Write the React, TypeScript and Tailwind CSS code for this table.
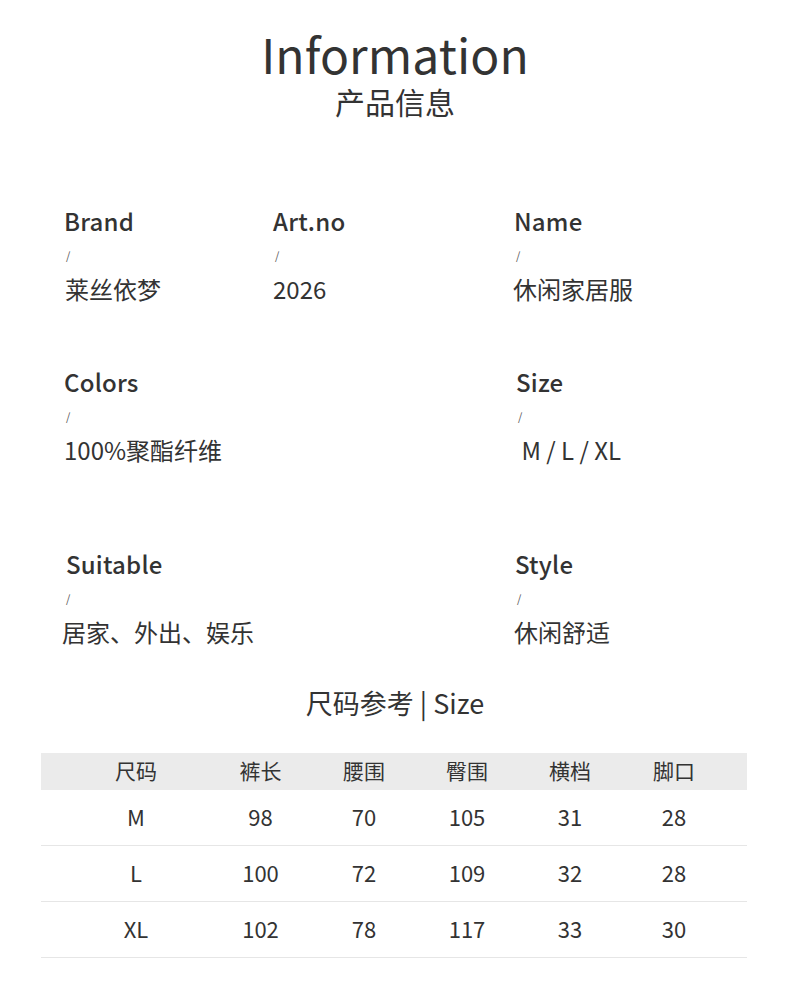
import React from "react";

const FONT = { fontFamily: '"Noto Sans CJK SC", "Noto Sans", sans-serif' };

interface InfoItemProps {
  label: string;
  value: string;
  labelClass?: string;
  valueClass?: string;
  slashClass?: string;
}

function InfoItem({ label, value, labelClass = "", valueClass = "", slashClass = "" }: InfoItemProps) {
  return (
    <div className="flex flex-col">
      <div className={"text-[24px] leading-none font-medium text-[#333] h-[24px] tracking-[0.2px] " + labelClass}>{label}</div>
      <div className={"text-[11px] leading-none text-[#555] mt-[17px] h-[12px] pl-[2px] " + slashClass}>/</div>
      <div className={"text-[24px] leading-none text-[#333] mt-[15px] h-[24px] whitespace-pre " + valueClass}>{value}</div>
    </div>
  );
}

const headers = ["尺码", "裤长", "腰围", "臀围", "横档", "脚口"];
const rows = [
  ["M", "98", "70", "105", "31", "28"],
  ["L", "100", "72", "109", "32", "28"],
  ["XL", "102", "78", "117", "33", "30"],
];

const gridCols = "grid grid-cols-[168px_103px_104px_102px_104px_104px] pr-[21px]";

export default function App() {
  return (
    <div className="w-[790px] h-[987px] bg-white text-[#333]" style={FONT}>
      {/* title */}
      <div className="pt-[29px] flex flex-col items-center">
        <div className="text-[48px] leading-none h-[48px] tracking-[0.1px]">Information</div>
        <div className="text-[30px] leading-none mt-[9px] h-[30px]">产品信息</div>
      </div>

      {/* info grid */}
      <div className="mt-[93px] pl-[64px]">
        <div className="grid grid-cols-[209px_241px_1fr]">
          <InfoItem label="Brand" value="莱丝依梦" valueClass="ml-[1px]" />
          <InfoItem label="Art.no" value="2026" />
          <InfoItem label="Name" value="休闲家居服" valueClass="-ml-[1px]" />
        </div>
        <div className="grid grid-cols-[450px_1fr] mt-[69px]">
          <InfoItem label="Colors" value="100%聚酯纤维" />
          <div className="ml-[2px]">
            <InfoItem label="Size" value=" M / L / XL" />
          </div>
        </div>
        <div className="grid grid-cols-[450px_1fr] mt-[90px]">
          <InfoItem label="Suitable" value="居家、外出、娱乐" labelClass="ml-[2px]" valueClass="-ml-[2px]" />
          <div className="ml-[1px]">
            <InfoItem label="Style" value="休闲舒适" valueClass="-ml-[1px]" />
          </div>
        </div>
      </div>

      {/* size heading */}
      <div className="mt-[45px] flex justify-center">
        <div className="text-[27px] leading-none h-[27px]">尺码参考 | Size</div>
      </div>

      {/* size table */}
      <div className="mt-[37px] mx-[41px] w-[706px]">
        <div className={gridCols + " bg-[#ebebeb] h-[37px] items-center pb-[2px]"}>
          {headers.map((h, i) => (
            <div key={h} className={"text-center text-[21px] leading-none " + (i === 0 ? "pl-[22px]" : "")}>
              {h}
            </div>
          ))}
        </div>
        {rows.map((r) => (
          <div key={r[0]} className={gridCols + " h-[56px] items-center pb-[3px] border-b border-[#e6e6e6]"}>
            {r.map((c, i) => (
              <div key={i} className={"text-center text-[22px] leading-none " + (i === 0 ? "pl-[22px]" : "")}>
                {c}
              </div>
            ))}
          </div>
        ))}
      </div>
    </div>
  );
}
